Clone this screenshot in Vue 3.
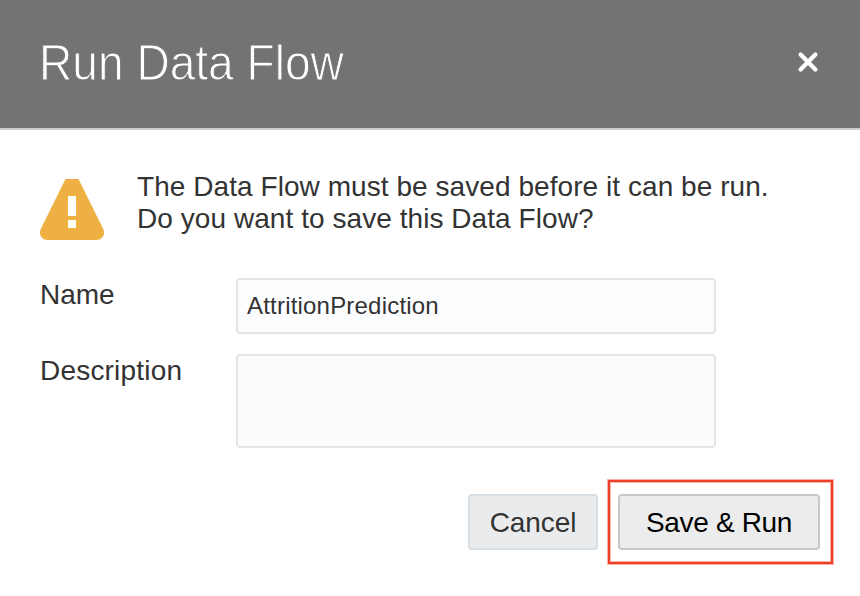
<script setup>
import { ref } from 'vue'

const name = ref('AttritionPrediction')
const description = ref('')
</script>

<template>
  <section class="dialog" role="dialog">
    <header class="header">
      <h1 class="title">Run Data Flow</h1>
      <button class="close" aria-label="Close">
        <svg width="22" height="22" viewBox="0 0 22 22">
          <path d="M3.600 3.600L18.400 18.400M18.400 3.600L3.600 18.400" stroke="#fff" stroke-width="4.300" stroke-linecap="round" />
        </svg>
      </button>
    </header>
    <div class="message">
      <svg class="warning" width="64" height="61" viewBox="0 0 64 61">
        <path d="M25.5 0H38.5L63 49.5C66 55.5 62 61 56.500 61H7.500C2 61 -2 55.500 1 49.500Z" fill="#eeb042" />
        <path d="M28 17h8v20h-8zM28 41h8v8h-8z" fill="#fff" />
      </svg>
      <p class="text">The Data Flow must be saved before it can be run.<br />Do you want to save this Data Flow?</p>
    </div>
    <form class="form" @submit.prevent>
      <label class="label" for="name">Name</label>
      <input id="name" v-model="name" class="field name" type="text" />
      <label class="label desc-label" for="desc">Description</label>
      <textarea id="desc" v-model="description" class="field desc"></textarea>
    </form>
    <footer class="actions">
      <button class="btn cancel">Cancel</button>
      <div class="highlight">
        <button class="btn primary">Save &amp; Run</button>
      </div>
    </footer>
  </section>
</template>

<style>
body {
  background: #fff;
  overflow: hidden;
}
</style>

<style scoped>
.dialog,
.dialog * {
  box-sizing: border-box;
}
.dialog {
  width: 860px;
  height: 596px;
  background: #fff;
  color: #333;
  font-family: "Liberation Sans", Arial, sans-serif;
  font-size: 28px;
  line-height: 32px;
}
.header {
  display: flex;
  justify-content: space-between;
  height: 130px;
  padding: 35px 41px 0 39px;
  background: #737373;
  border-bottom: 2px solid #ccc;
}
.title {
  margin: 0;
  color: #fff;
  font-size: 50px;
  font-weight: 400;
  line-height: 57px;
  white-space: nowrap;
  -webkit-text-stroke: 1px #737373;
  transform: scaleX(0.922);
  transform-origin: left;
}
.close {
  width: 22px;
  height: 22px;
  margin-top: 16px;
  padding: 0;
  border: 0;
  background: none;
}
.close svg {
  display: block;
}
.message {
  display: flex;
  gap: 33px;
  padding: 41px 0 0 40px;
}
.warning {
  flex: none;
  margin-top: 8px;
}
.text {
  margin: 0;
  letter-spacing: 0.06px;
  white-space: nowrap;
}
.form {
  display: grid;
  grid-template-columns: 196px 480px;
  row-gap: 20px;
  padding: 38px 0 0 40px;
}
.label {
  padding-top: 1px;
}
.desc-label {
  letter-spacing: 0.2px;
}
.field {
  display: block;
  width: 480px;
  margin: 0;
  border: 2px solid #e4e6e6;
  border-radius: 4px;
  outline: none;
  color: #333;
  font: 24px "Liberation Sans", Arial, sans-serif;
  letter-spacing: 0.2px;
  resize: none;
}
.name {
  height: 56px;
  padding: 0 9px;
  background: #fcfdff;
}
.desc {
  height: 94px;
  background: #fcfcfc;
}
.actions {
  display: flex;
  align-items: center;
  justify-content: flex-end;
  gap: 10px;
  padding: 32px 27px 0 0;
}
.highlight {
  padding: 12px 11px 12px 8px;
  border: 2px solid #ee4128;
  box-shadow: 0 0 0 1px rgba(238, 65, 40, 0.4), inset 0 0 0 1px rgba(238, 65, 40, 0.4);
}
.btn {
  display: block;
  height: 56px;
  padding: 2px 0 0;
  border: 2px solid #c8c8c8;
  border-radius: 4px;
  font: 28px "Liberation Sans", Arial, sans-serif;
}
.cancel {
  width: 130px;
  background: #eaebed;
  border-color: #d7dfe5;
  color: #333;
  letter-spacing: -0.1px;
}
.primary {
  width: 202px;
  background: #ececec;
  color: #000;
  letter-spacing: -0.35px;
}
</style>
